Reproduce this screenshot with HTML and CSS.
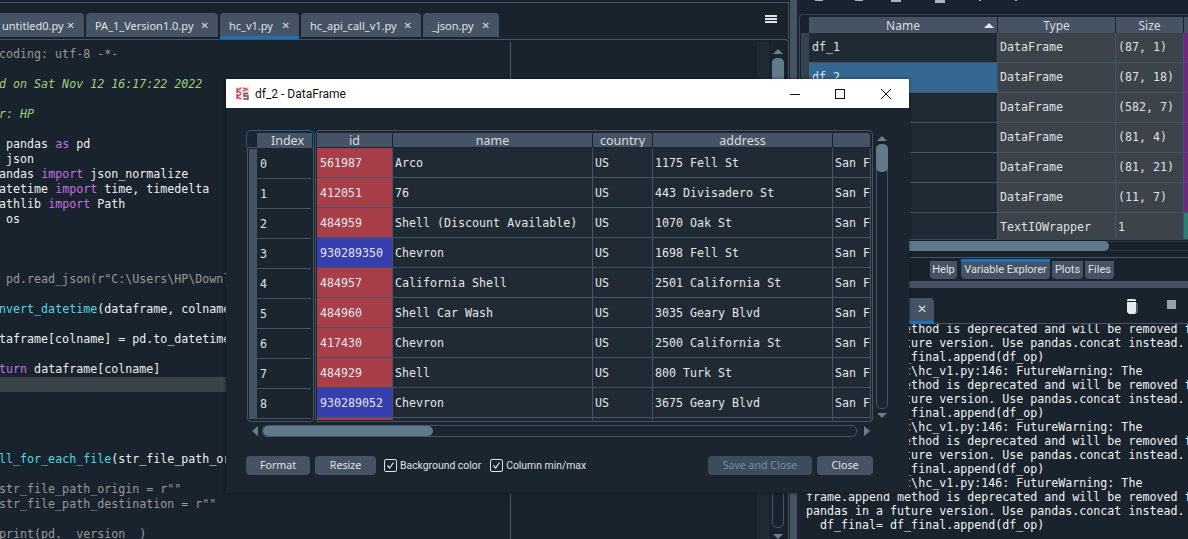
FILE: index.html
```html
<!DOCTYPE html>
<html lang="en">
<head>
<meta charset="utf-8">
<title>Spyder - df_2 DataFrame</title>
<link rel="stylesheet" href="styles.css">
</head>
<body>
<div class="app">
  <main class="left">
    <div class="tabbar">
      <div class="tabs">
        <div class="tab first"><span>untitled0.py</span><span class="x">✕</span></div>
        <div class="tab"><span>PA_1_Version1.0.py</span><span class="x">✕</span></div>
        <div class="tab active"><span>hc_v1.py</span><span class="x">✕</span></div>
        <div class="tab"><span>hc_api_call_v1.py</span><span class="x">✕</span></div>
        <div class="tab"><span>_json.py</span><span class="x">✕</span></div>
      </div>
      <div class="burger"><i></i><i></i><i></i></div>
    </div>
    <div class="editor">
      <div class="code">
        <div class="edge"></div>
        <div class="lines">
<div class="l c"># -*- coding: utf-8 -*-</div>
<div class="l s">"""</div>
<div class="l s">Created on Sat Nov 12 16:17:22 2022</div>
<div class="l"></div>
<div class="l s">@author: HP</div>
<div class="l s">"""</div>
<div class="l"><b>import</b> pandas <b>as</b> pd</div>
<div class="l"><b>import</b> json</div>
<div class="l"><b>from</b> pandas <b>import</b> json_normalize</div>
<div class="l"><b>from</b> datetime <b>import</b> time, timedelta</div>
<div class="l"><b>from</b> pathlib <b>import</b> Path</div>
<div class="l"><b>import</b> os</div>
<div class="l"></div>
<div class="l"></div>
<div class="l"></div>
<div class="l c"># df = pd.read_json(r"C:\Users\HP\Downloads\data.json")</div>
<div class="l"></div>
<div class="l"><b>def</b> <em>convert_datetime</em>(dataframe, colname):</div>
<div class="l"></div>
<div class="l">    dataframe[colname] = pd.to_datetime(dataframe[colname])</div>
<div class="l"></div>
<div class="l">    <b>return</b> dataframe[colname]</div>
<div class="l cur"></div>
<div class="l"></div>
<div class="l"></div>
<div class="l"></div>
<div class="l"></div>
<div class="l"><b>def</b> <em>call_for_each_file</em>(str_file_path_origin, str_file_path_destination):</div>
<div class="l"></div>
<div class="l c">    # str_file_path_origin = r""</div>
<div class="l c">    # str_file_path_destination = r""</div>
<div class="l"></div>
<div class="l c">    # print(pd.__version__)</div>
        </div>
      </div>
      <div class="ed-panel"></div>
      <div class="vbar ed-bar">
        <div class="up"></div>
        <div class="track"><div class="thumb"></div></div>
        <div class="down"></div>
      </div>
    </div>
  </main>

  <div class="splitter"></div>

  <aside class="right">
    <div class="top-tools">
      <svg width="390" height="14" viewBox="0 0 390 14"><g fill="#a9b4bc"><rect x="16" width="8" height="1"/><rect x="56" width="8" height="1"/><rect x="92" width="10" height="2"/><rect x="136" width="10" height="3"/><rect x="180" width="2" height="1"/><rect x="216" width="2" height="1"/></g></svg>
    </div>
    <div class="var-frame">
      <div class="var-head">
        <div class="vh name">Name<span class="sort"></span></div>
        <div class="vh">Type</div>
        <div class="vh">Size</div>
        <div class="vh"></div>
      </div>
      <div class="var-body">
        <div class="var-side"></div>
        <div class="var-rows">
          <div class="vr"><div class="n">df_1</div><div class="t">DataFrame</div><div class="t">(87, 1)</div><div class="v purple"></div></div>
          <div class="vr"><div class="n sel">df_2</div><div class="t">DataFrame</div><div class="t">(87, 18)</div><div class="v purple"></div></div>
          <div class="vr"><div class="n">df_3</div><div class="t">DataFrame</div><div class="t">(582, 7)</div><div class="v purple"></div></div>
          <div class="vr"><div class="n">df_4</div><div class="t">DataFrame</div><div class="t">(81, 4)</div><div class="v purple"></div></div>
          <div class="vr"><div class="n">df_5</div><div class="t">DataFrame</div><div class="t">(81, 21)</div><div class="v purple"></div></div>
          <div class="vr"><div class="n">df_6</div><div class="t">DataFrame</div><div class="t">(11, 7)</div><div class="v purple"></div></div>
          <div class="vr"><div class="n">f</div><div class="t">TextIOWrapper</div><div class="t">1</div><div class="v teal"></div></div>
        </div>
      </div>
    </div>
    <div class="var-hbar"><div class="var-thumb"></div></div>
    <div class="pane-tabs">
      <div class="ptab">Help</div>
      <div class="ptab on">Variable Explorer</div>
      <div class="ptab">Plots</div>
      <div class="ptab">Files</div>
    </div>
    <div class="hsplit"></div>
    <div class="console-tools">
      <div class="ctab"><span class="x">✕</span></div>
      <div class="ctools">
        <svg class="trash" width="12" height="16" viewBox="0 0 12 16"><path d="M2 1h7l1 1v1H1V2z" fill="#e8ebed"/><path d="M1 4h9v10l-1 2H3l-2-2z" fill="#e8ebed"/><path d="M10 5l1 1v8l-2 2" fill="none" stroke="#8b959c"/></svg>
        <span class="stop"></span>
      </div>
    </div>
    <div class="console">
<div class="cl">frame.append method is deprecated and will be removed from</div>
<div class="cl">pandas in a future version. Use pandas.concat instead.</div>
<div class="cl">  df_final= df_final.append(df_op)</div>
<div class="cl">C:\Users\HP\Doc\hc_v1.py:146: FutureWarning: The</div>
<div class="cl">frame.append method is deprecated and will be removed from</div>
<div class="cl">pandas in a future version. Use pandas.concat instead.</div>
<div class="cl">  df_final= df_final.append(df_op)</div>
<div class="cl">C:\Users\HP\Doc\hc_v1.py:146: FutureWarning: The</div>
<div class="cl">frame.append method is deprecated and will be removed from</div>
<div class="cl">pandas in a future version. Use pandas.concat instead.</div>
<div class="cl">  df_final= df_final.append(df_op)</div>
<div class="cl">C:\Users\HP\Doc\hc_v1.py:146: FutureWarning: The</div>
<div class="cl">frame.append method is deprecated and will be removed from</div>
<div class="cl">pandas in a future version. Use pandas.concat instead.</div>
<div class="cl">  df_final= df_final.append(df_op)</div>
    </div>
  </aside>
</div>

<section class="dialog">
  <header class="titlebar">
    <svg class="logo" width="13" height="13" viewBox="0 0 13 13"><rect width="13" height="13" rx="1" fill="#f3dcdc"/><path d="M1 1v5M1 3.500l4-2.500M1 3.500l4 2.500M1 7v5M1 9.500l4-2.500M1 9.500l4 2.500M7 1l5 1.500M7 4l5-2" stroke="#c23f4a" stroke-width="1.200" fill="none"/><path d="M12 6.500H8v2.500h4v3H7.500" stroke="#555b60" stroke-width="1.300" fill="none"/></svg>
    <span class="wintitle">df_2 - DataFrame</span>
    <div class="winbtns">
      <svg width="12" height="12" viewBox="0 0 12 12"><path d="M2 6.500h10" stroke="#111"/></svg>
      <svg width="12" height="12" viewBox="0 0 12 12"><rect x="1.500" y="1.500" width="9" height="9" fill="none" stroke="#111"/></svg>
      <svg width="12" height="12" viewBox="0 0 12 12"><path d="M1 1l10 10M11 1L1 11" stroke="#111"/></svg>
    </div>
  </header>
  <div class="dbody">
    <div class="df-area">
      <div class="df-table">
        <div class="idx-head"><div class="idx-title">Index</div></div>
        <div class="data-head">
          <div class="dh">id</div><div class="dh">name</div><div class="dh">country</div><div class="dh">address</div><div class="dh"></div>
        </div>
        <div class="idx-body">
          <div class="idx-bar"></div>
          <div class="idx-rows">
            <div class="ir">0</div><div class="ir">1</div><div class="ir">2</div><div class="ir">3</div><div class="ir">4</div><div class="ir">5</div><div class="ir">6</div><div class="ir">7</div><div class="ir">8</div>
          </div>
        </div>
        <div class="data-body">
          <div class="dr"><div class="d red">561987</div><div class="d">Arco</div><div class="d">US</div><div class="d">1175 Fell St</div><div class="d">San Francisco</div></div>
          <div class="dr"><div class="d red">412051</div><div class="d">76</div><div class="d">US</div><div class="d">443 Divisadero St</div><div class="d">San Francisco</div></div>
          <div class="dr"><div class="d red">484959</div><div class="d">Shell (Discount Available)</div><div class="d">US</div><div class="d">1070 Oak St</div><div class="d">San Francisco</div></div>
          <div class="dr"><div class="d blue">930289350</div><div class="d">Chevron</div><div class="d">US</div><div class="d">1698 Fell St</div><div class="d">San Francisco</div></div>
          <div class="dr"><div class="d red">484957</div><div class="d">California Shell</div><div class="d">US</div><div class="d">2501 California St</div><div class="d">San Francisco</div></div>
          <div class="dr"><div class="d red">484960</div><div class="d">Shell Car Wash</div><div class="d">US</div><div class="d">3035 Geary Blvd</div><div class="d">San Francisco</div></div>
          <div class="dr"><div class="d red">417430</div><div class="d">Chevron</div><div class="d">US</div><div class="d">2500 California St</div><div class="d">San Francisco</div></div>
          <div class="dr"><div class="d red">484929</div><div class="d">Shell</div><div class="d">US</div><div class="d">800 Turk St</div><div class="d">San Francisco</div></div>
          <div class="dr"><div class="d blue">930289052</div><div class="d">Chevron</div><div class="d">US</div><div class="d">3675 Geary Blvd</div><div class="d">San Francisco</div></div>
          <div class="dr peek"><div class="d red"></div><div class="d"></div><div class="d"></div><div class="d"></div><div class="d"></div></div>
        </div>
      </div>
      <div class="vbar df-bar">
        <div class="up"></div>
        <div class="track"><div class="thumb"></div></div>
        <div class="down"></div>
      </div>
    </div>
    <div class="hbar">
      <div class="left-arrow"></div>
      <div class="htrack"><div class="hthumb"></div></div>
      <div class="right-arrow"></div>
    </div>
    <div class="actions">
      <button class="btn fmt">Format</button>
      <button class="btn rsz">Resize</button>
      <label class="chk"><span class="box"><svg width="11" height="11" viewBox="0 0 11 11"><path d="M2.500 5.500l2.200 2.500 3.800-5.500" fill="none" stroke="#e6eaec" stroke-width="1.200"/></svg></span>Background color</label>
      <label class="chk"><span class="box"><svg width="11" height="11" viewBox="0 0 11 11"><path d="M2.500 5.500l2.200 2.500 3.800-5.500" fill="none" stroke="#e6eaec" stroke-width="1.200"/></svg></span>Column min/max</label>
      <span class="spacer"></span>
      <button class="btn save" disabled>Save and Close</button>
      <button class="btn cls">Close</button>
    </div>
  </div>
</section>
</body>
</html>
```

FILE: styles.css
```css
* { box-sizing: border-box; }
html, body { margin: 0; padding: 0; }
body {
  width: 1188px;
  height: 539px;
  overflow: hidden;
  background: #19232d;
  color: #e0e1e3;
  font-family: "Noto Sans", "Liberation Sans", sans-serif;
  font-size: 11px;
  position: relative;
}
.app {
  display: grid;
  grid-template-columns: 790px 8px 390px;
  height: 539px;
  overflow: hidden;
}

/* ---- left: editor ---- */
.left { display: flex; flex-direction: column; height: 539px; overflow: hidden; padding-top: 2px; }
.tabbar {
  height: 37px;
  border-top: 1px solid #455364;
  border-right: 1px solid #455364;
  display: flex;
  justify-content: space-between;
  padding: 10px 11px 0 0;
  margin-right: 1px;
}
.tabs {
  display: grid;
  grid-template-columns: 84px 132px 79px 120px 76px;
  column-gap: 2px;
}
.tab {
  height: 24px;
  background: #455364;
  border-radius: 4px 4px 0 0;
  color: #dfe2e4;
  font-size: 11px;
  line-height: 26px;
  padding: 0 9px 0 9px;
  display: flex;
  justify-content: space-between;
  white-space: nowrap;
}
.tab.first { padding-left: 2px; border-radius: 0 4px 0 0; }
.tab.active { height: 26px; border-bottom: 3px solid #1a72bb; }
.x { font-size: 10px; color: #d5dade; font-family: "DejaVu Sans", sans-serif; }
.burger { display: flex; flex-direction: column; gap: 1.500px; width: 12px; margin-top: 2px; }
.burger i { display: block; height: 1.500px; background: #dfe2e4; }

.editor {
  flex: 1;
  min-height: 0;
  display: flex;
  border-top: 1px solid #455364;
  border-right: 1px solid #455364;
  border-radius: 0 4px 0 0;
  margin-right: 1px;
  overflow: hidden;
}
.code { width: 757px; position: relative; overflow: hidden; padding-top: 7px; }
.edge { position: absolute; left: 510px; top: 2px; bottom: 0; width: 1px; background: #4b5866; }
.lines {
  font-family: "DejaVu Sans Mono", monospace;
  font-size: 11.650px;
  line-height: 15px;
  color: #eceff1;
}
.l { height: 15px; white-space: pre; padding-left: 0; text-indent: -43px; }
.l b { font-weight: normal; color: #c670e0; }
.l em { font-style: normal; color: #57d6e4; }
.l.c { color: #999999; }
.l.s { color: #a0d27c; font-style: italic; }
.l.cur { background: #3a424a; }
.ed-panel { width: 12px; background: #1f2a33; margin-top: 2px; }

.vbar { display: flex; flex-direction: column; align-items: center; }
.up { width: 0; height: 0; border: 5px solid transparent; border-top: 0; border-bottom-color: #6d7d8b; flex: none; }
.down { width: 0; height: 0; border: 5px solid transparent; border-bottom: 0; border-top-color: #6d7d8b; flex: none; }
.track { flex: 1; width: 12px; border: 1px solid #455364; border-radius: 5px; min-height: 0; }
.thumb { background: #60798b; border-radius: 5px; margin: -1px; }
.ed-bar { width: 12px; margin-left: 3px; padding-top: 9px; height: 499px; }
.ed-bar .track { margin-top: 4px; margin-bottom: 6px; }
.ed-bar .thumb { height: 60px; }

.splitter { background: #455364; margin-right: 1px; }

/* ---- right: explorer + console ---- */
.right { display: flex; flex-direction: column; height: 539px; overflow: hidden; border-left: 1px solid #1e2a35; }
.top-tools { height: 14px; flex: none; }
.top-tools svg { display: block; }
.var-frame {
  height: 226px;
  flex: none;
  border: 1px solid #3a4653;
  border-right: 0;
  border-radius: 4px 0 0 4px;
  padding-top: 2px;
  overflow: hidden;
}
.var-head {
  display: grid;
  grid-template-columns: 188px 117px 67px 1fr;
  column-gap: 1px;
  margin-left: 9px;
  height: 16px;
  overflow: hidden;
}
.vh {
  background: #455364;
  font-size: 12px;
  line-height: 18px;
  height: 16px;
  text-align: center;
  color: #d8dcdf;
  position: relative;
}
.sort {
  position: absolute;
  right: 3px;
  top: 6px;
  width: 0;
  height: 0;
  border: 5px solid transparent;
  border-top: 0;
  border-bottom-color: #e6e9eb;
}
.var-body { display: flex; margin-left: 1px; }
.var-side { width: 8px; background: #35414e; height: 207px; flex: none; }
.var-rows { flex: 1; display: flex; flex-direction: column; row-gap: 1px; background: #455364; height: 206px; }
.vr {
  display: grid;
  grid-template-columns: 188px 117px 67px 1fr;
  column-gap: 1px;
  height: 29px;
  flex: none;
  font-family: "DejaVu Sans Mono", monospace;
  font-size: 11.650px;
  line-height: 28px;
  color: #dfe2e4;
  background: #455364;
}
.vr > div { padding-left: 2px; white-space: nowrap; overflow: hidden; }
.vr > .n { padding-left: 3px; }
.n { background: #1f2a35; }
.n.sel { background: #346792; }
.t { background: #3d434a; }
.v.purple { background: #6c2a7a; }
.v.teal { background: #2a7f72; }

.var-hbar {
  height: 10px;
  margin-top: 1px;
  flex: none;
  border-top: 1px solid #2d3945;
  border-bottom: 1px solid #2d3945;
}
.var-thumb { width: 310px; height: 10px; margin-top: -1px; background: #60798b; border-radius: 0 5px 5px 0; }
.pane-tabs {
  height: 24px;
  flex: none;
  margin-top: 6px;
  border-top: 1px solid #455364;
  display: flex;
  align-items: flex-end;
  column-gap: 2px;
  padding: 0 0 2px 131px;
}
.ptab {
  height: 18px;
  background: #455364;
  border-radius: 0 0 4px 4px;
  line-height: 18px;
  font-family: Roboto, "Noto Sans", sans-serif;
  font-size: 11px;
  text-align: center;
  color: #dfe2e4;
  white-space: nowrap;
}
.ptab:nth-child(1) { width: 27px; }
.ptab:nth-child(2) { width: 89px; height: 20px; margin-left: 2px; border-top: 3px solid #1a72bb; line-height: 15px; }
.ptab:nth-child(3) { width: 31px; }
.ptab:nth-child(4) { width: 29px; }
.hsplit { height: 7px; flex: none; background: #455364; }
.console-tools {
  height: 36px;
  flex: none;
  display: flex;
  justify-content: space-between;
  border-bottom: 1px solid #455364;
  padding-top: 10px;
}
.ctab {
  margin-left: 7px;
  width: 128px;
  height: 26px;
  background: #455364;
  border-bottom: 3px solid #1a72bb;
  border-radius: 4px 4px 0 0;
  text-align: right;
  padding: 3px 7px 0 0;
}
.ctab .x { font-size: 12px; }
.ctools { display: flex; column-gap: 29px; align-items: flex-start; padding-right: 12px; }
.trash { display: block; }
.stop { display: block; width: 9px; height: 9px; background: #9aa0a5; margin-top: 2px; }
.console {
  flex: 1;
  min-height: 0;
  overflow: hidden;
  padding-left: 7px;
  font-family: "DejaVu Sans Mono", monospace;
  font-size: 11.650px;
  line-height: 14px;
  color: #f0f2f3;
}
.cl { height: 14px; white-space: pre; position: relative; top: -2px; }

/* ---- dialog window ---- */
.dialog {
  position: absolute;
  left: 226px;
  top: 79px;
  width: 683px;
  height: 414px;
  background: #1a2530;
  box-shadow: 0 0 3px rgba(0, 0, 0, .6);
  display: flex;
  flex-direction: column;
}
.titlebar {
  height: 29px;
  flex: none;
  background: #ffffff;
  color: #111;
  display: flex;
  align-items: center;
  padding-left: 10px;
}
.logo { flex: none; }
.wintitle { margin-left: 6px; font-family: Roboto, "Noto Sans", sans-serif; font-size: 12px; white-space: nowrap; }
.winbtns { margin-left: auto; display: flex; column-gap: 34px; padding-right: 17px; }
.winbtns svg { display: block; }
.dbody { flex: 1; padding: 22px 0 0 20px; display: flex; flex-direction: column; }
.df-area { display: flex; height: 292px; flex: none; }
.df-table {
  display: grid;
  grid-template-columns: 69px 558px;
  grid-template-rows: 17px 275px;
  width: 627px;
}
.idx-head {
  border: 1px solid #1d5f94;
  border-bottom: 0;
  border-radius: 5px 5px 0 0;
  padding: 2px 1px 0 10px;
  margin-right: 1px;
}
.idx-title {
  background: #455364;
  height: 14px;
  overflow: hidden;
  font-size: 12.500px;
  line-height: 16px;
  text-align: center;
  color: #d8dcdf;
  padding-left: 6px;
}
.data-head {
  border: 1px solid #455364;
  border-bottom: 0;
  border-radius: 5px 5px 0 0;
  padding: 2px 1px 0;
  display: grid;
  grid-template-columns: 75px 199px 59px 179px 37px;
  column-gap: 1px;
}
.dh {
  background: #455364;
  height: 14px;
  overflow: hidden;
  font-size: 12.500px;
  line-height: 16px;
  text-align: center;
  color: #d8dcdf;
}
.idx-body {
  border: 1px solid #455364;
  border-radius: 0 0 4px 4px;
  display: flex;
  margin-left: 1px;
  margin-right: 1px;
  padding: 1px 2px 2px 1px;
}
.idx-bar { width: 8px; background: #455364; flex: none; }
.idx-rows { flex: 1; overflow: hidden; }
.ir {
  height: 30px;
  border-bottom: 1px solid #455364;
  padding-left: 3px;
  font-family: "DejaVu Sans Mono", monospace;
  font-size: 11.650px;
  line-height: 30px;
  color: #dfe2e4;
}
.data-body {
  border: 1px solid #455364;
  border-top: 0;
  border-radius: 0 0 4px 4px;
  padding: 1px 1px 2px;
  overflow: hidden;
}
.dr {
  display: grid;
  grid-template-columns: 75px 199px 59px 179px 37px;
  column-gap: 1px;
  height: 30px;
  background: #455364;
  padding-bottom: 1px;
}
.dr.peek { height: 2px; padding-bottom: 0; }
.d {
  background: #1f2a35;
  padding-left: 2px;
  font-family: "DejaVu Sans Mono", monospace;
  font-size: 11.650px;
  line-height: 31px;
  color: #e4e6e8;
  white-space: nowrap;
  overflow: hidden;
}
.d.red { background: #a83e4a; padding-left: 3px; }
.d.blue { background: #373eb0; padding-left: 3px; }
.df-bar { width: 12px; margin-left: 3px; padding-top: 6px; height: 288px; }
.df-bar .track { margin-top: 3px; margin-bottom: 4px; }
.df-bar .thumb { height: 28px; }

.hbar { display: flex; align-items: center; height: 12px; margin-top: 3px; padding-left: 6px; flex: none; width: 625px; }
.left-arrow { width: 0; height: 0; border: 5px solid transparent; border-left: 0; border-right-color: #6d7d8b; flex: none; border-right-width: 6px; }
.right-arrow { width: 0; height: 0; border: 5px solid transparent; border-right: 0; border-left-color: #6d7d8b; flex: none; border-left-width: 6px; margin-left: 7px; }
.htrack { width: 595px; height: 12px; border: 1px solid #455364; border-radius: 5px; margin-left: 4px; }
.hthumb { width: 170px; height: 10px; background: #60798b; border-radius: 5px; margin-top: 0; }

.actions { display: flex; align-items: center; height: 19px; margin-top: 19px; width: 627px; flex: none; }
.btn {
  height: 19px;
  padding: 0;
  border: 0;
  border-radius: 4px;
  background: #455364;
  color: #e0e3e5;
  font-family: "Noto Sans", "Liberation Sans", sans-serif;
  font-size: 10.600px;
  line-height: 19px;
}
.btn.fmt { width: 64px; }
.btn.rsz { width: 61px; margin-left: 5px; }
.btn.save { width: 104px; color: #788d9c; background: #3d4c5d; }
.btn.cls { width: 56px; margin-left: 5px; }
.chk { display: flex; align-items: center; font-family: Roboto, "Noto Sans", sans-serif; font-size: 10.400px; color: #dfe2e4; white-space: nowrap; margin-left: 8px; column-gap: 3px; }
.chk + .chk { margin-left: 9px; }
.box { width: 13px; height: 13px; border: 1px solid #dfe2e4; border-radius: 2px; display: block; flex: none; }
.box svg { display: block; }
.spacer { flex: 1; }
```
